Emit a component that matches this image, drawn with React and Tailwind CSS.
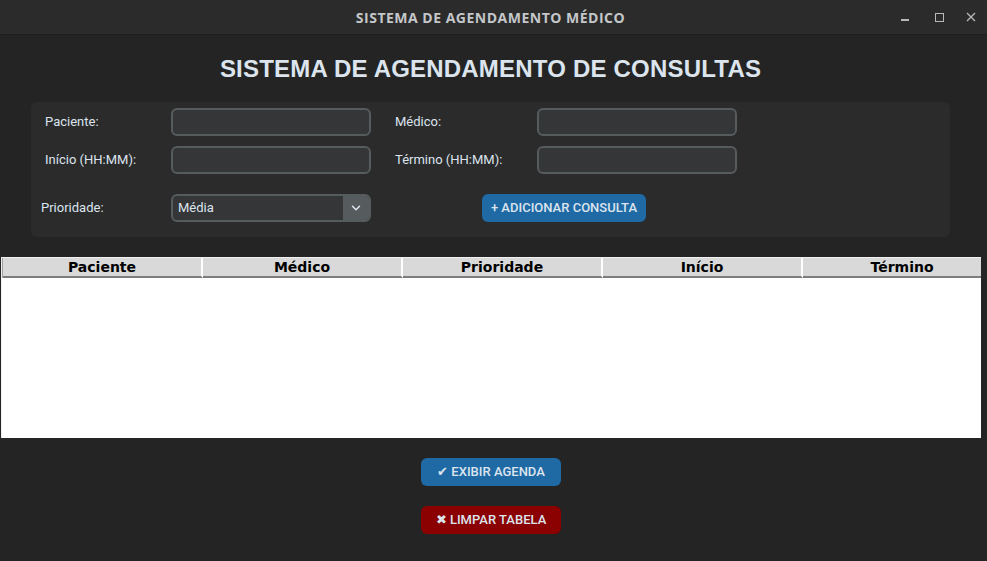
import { ChevronDown } from "lucide-react";

const columns = ["Paciente", "Médico", "Prioridade", "Início", "Término"];

function Field({ className = "" }) {
  return (
    <div
      className={`h-[28px] w-[200px] rounded-[6px] border-2 border-[#565b5e] bg-[#343638] ${className}`}
    />
  );
}

function Label({ children, className = "" }) {
  return (
    <span
      className={`text-[13px] text-[#dce4ee] font-['Roboto',sans-serif] ${className}`}
    >
      {children}
    </span>
  );
}

export default function App() {
  return (
    <div className="w-[987px] h-[561px] overflow-hidden bg-[#242424] flex flex-col">
      {/* Window title bar */}
      <div className="relative h-[35px] shrink-0 bg-[#2b2b2b] border-b border-[#1e1e1e] flex items-center justify-center pr-[6px]">
        <span className="text-[14px] font-bold tracking-[0.5px] text-[#c4c7ca] font-['Open_Sans',sans-serif]">
          SISTEMA DE AGENDAMENTO MÉDICO
        </span>
        <div className="absolute right-0 top-0 h-full flex items-center text-[#b8b8b8]">
          <div className="w-[34px] flex justify-center">
            <div className="mt-[6px] h-[1.5px] w-[8px] bg-[#b8b8b8]" />
          </div>
          <div className="w-[34px] flex justify-center">
            <div className="h-[9px] w-[9px] border border-[#b8b8b8]" />
          </div>
          <div className="w-[30px] mr-[1px] flex justify-center">
            <svg width="10" height="10" viewBox="0 0 10 10">
              <path d="M1 1L9 9M9 1L1 9" stroke="#b8b8b8" strokeWidth="1.3" />
            </svg>
          </div>
        </div>
      </div>

      <div className="flex-1 flex flex-col">
        {/* Heading */}
        <h1 className="w-[981px] pt-[20px] h-[48px] leading-[28px] text-center text-[24px] tracking-[0.2px] font-bold text-[#dce4ee] font-['Liberation_Sans',Arial,sans-serif]">
          SISTEMA DE AGENDAMENTO DE CONSULTAS
        </h1>

        {/* Form frame */}
        <div className="mt-[19px] ml-[31px] w-[919px] h-[135px] rounded-[6px] bg-[#2b2b2b] pt-[6px] flex flex-col">
          <div className="flex items-center pl-[14px]">
            <Label className="w-[126px]">Paciente:</Label>
            <Field />
            <Label className="ml-[24px] w-[142px]">Médico:</Label>
            <Field />
          </div>
          <div className="mt-[10px] flex items-center pl-[14px]">
            <Label className="w-[126px]">Início (HH:MM):</Label>
            <Field />
            <Label className="ml-[24px] w-[142px]">Término (HH:MM):</Label>
            <Field />
          </div>
          <div className="mt-[20px] flex items-center pl-[10px]">
            <Label className="w-[130px]">Prioridade:</Label>
            <div className="h-[28px] w-[200px] rounded-[6px] border-2 border-[#565b5e] bg-[#343638] flex overflow-hidden">
              <span className="flex-1 pl-[5px] leading-[24px] text-[13px] text-[#dce4ee] font-['Roboto',sans-serif]">
                Média
              </span>
              <div className="w-[26px] bg-[#565b5e] flex items-center justify-center">
                <ChevronDown size={14} strokeWidth={2.5} color="#dce4ee" />
              </div>
            </div>
            <button className="ml-[111px] h-[28px] w-[164px] rounded-[6px] bg-[#1f6aa5] text-[13px] font-medium text-[#dce4ee] font-['Roboto',sans-serif]">
              + ADICIONAR CONSULTA
            </button>
          </div>
        </div>

        {/* Table */}
        <div className="mt-[20px] ml-[1px] w-[980px] h-[181px] bg-white border-l border-t border-[#f0f0f0] flex flex-col overflow-hidden">
          <div className="flex h-[20px] border-l border-[#a0a0a0]">
            {columns.map((col) => (
              <div
                key={col}
                className="h-full w-[200px] shrink-0 bg-[#d9d9d9] border-b-2 border-[#7d7d7d] border-r-2 border-r-[#ffffff] flex items-center justify-center text-[14px] font-bold text-black font-['DejaVu_Sans',sans-serif]"
              >
                {col}
              </div>
            ))}
          </div>
        </div>

        {/* Action buttons */}
        <div className="mt-[20px] ml-[421px] flex flex-col gap-[20px]">
          <button className="h-[28px] w-[140px] rounded-[6px] bg-[#1f6aa5] text-[13px] font-medium text-[#dce4ee] font-['Roboto',sans-serif]">
            ✔ EXIBIR AGENDA
          </button>
          <button className="h-[28px] w-[140px] rounded-[6px] bg-[#8b0000] text-[13px] font-medium text-[#dce4ee] font-['Roboto',sans-serif]">
            ✖ LIMPAR TABELA
          </button>
        </div>
      </div>
    </div>
  );
}
